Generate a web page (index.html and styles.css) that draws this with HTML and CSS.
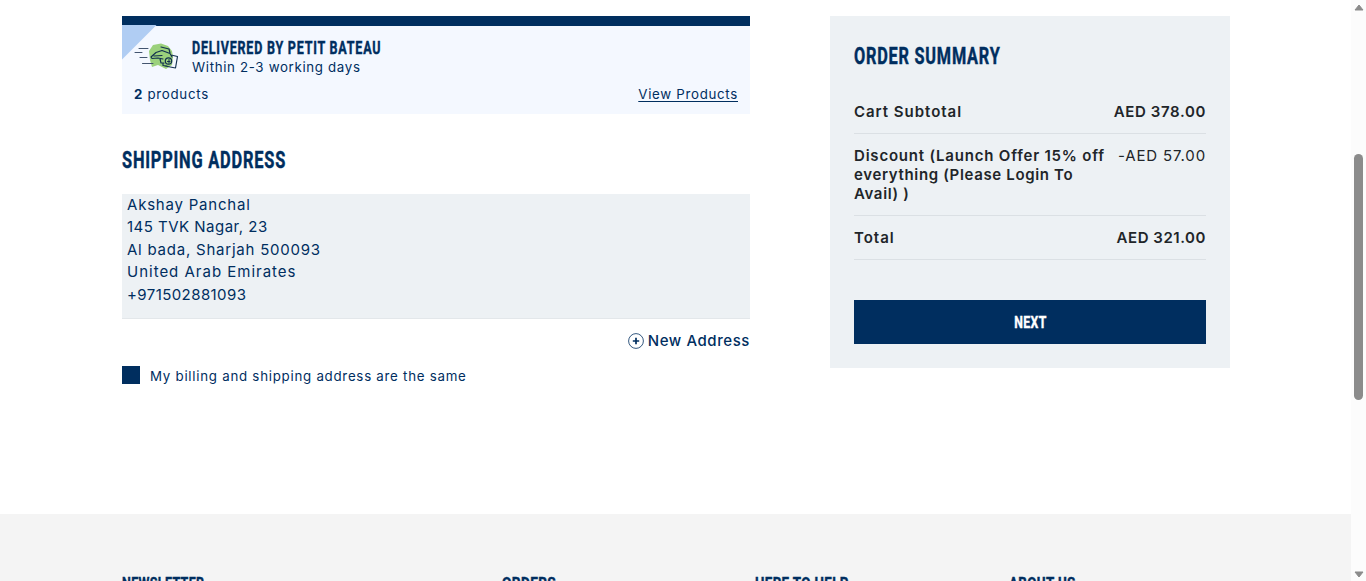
FILE: index.html
```html
<!DOCTYPE html>
<html lang="en">
<head>
<meta charset="utf-8">
<title>Checkout</title>
<link rel="stylesheet" href="styles.css">
</head>
<body>
<div class="window">
  <div class="page">
    <main class="checkout">
      <section class="details">
        <article class="delivery">
          <svg class="corner" viewBox="0 0 35 35"><path d="M0 0H34.500L0 34.500Z" fill="#b0cdf3"/></svg>
          <div class="delivery-head">
            <svg class="express" viewBox="0 0 46 28" fill="none" stroke-linecap="round" stroke-linejoin="round">
              <path d="M19 2 27 .5 34 3 38 8 39 14 38 22 32 26 24 22 18 24 16 17 15 8Z" fill="#9bd17c"/>
              <path d="M5 5.500H14M1 9.500H8M6 14.500H13M8.500 20.500H19" stroke="#43556f"/>
              <path d="M27 4 35 6 36 10M37 12 43.500 13.500 41.500 25 31 23M17 14 22 9.500 28 7.500 36 10.500 38 14M17 14 18 15.500 24 15 29 16M20 13 28 12.500M26 16 27 20 30 20M29 20 29 22.500 33 23" stroke="#12304f" stroke-width="1.150"/>
              <circle cx="34.500" cy="18" r="3.200" stroke="#12304f" stroke-width="1.200"/>
              <path d="M33.500 18.500H36M35 16.500V20" stroke="#12304f"/>
            </svg>
            <div>
              <h3 class="delivery-title"><span>DELIVERED BY PETIT BATEAU</span></h3>
              <p class="delivery-time">Within 2-3 working days</p>
            </div>
          </div>
          <div class="delivery-foot">
            <span class="count"><b>2</b> products</span>
            <a class="view" href="#">View Products</a>
          </div>
        </article>
        <h2 class="heading shipping"><span>SHIPPING ADDRESS</span></h2>
        <address class="address">
          <div><span class="a1">Akshay Panchal</span></div>
          <div><span class="a2">145 TVK Nagar, 23</span></div>
          <div><span class="a3">Al bada, Sharjah 500093</span></div>
          <div><span class="a4">United Arab Emirates</span></div>
          <div><span class="a5">+971502881093</span></div>
        </address>
        <a class="new-address" href="#">
          <svg viewBox="0 0 16 16" fill="none" stroke="#002e5f"><circle cx="8" cy="8" r="7.400" stroke-width=".8"/><path d="M8 4.800V11.200M4.800 8H11.200" stroke-width="1.700"/></svg>
          <span>New Address</span>
        </a>
        <label class="same"><i class="box"></i><span>My billing and shipping address are the same</span></label>
      </section>
      <aside class="summary">
        <h2 class="heading order"><span>ORDER SUMMARY</span></h2>
        <div class="row"><span class="s1">Cart Subtotal</span><span class="v1">AED 378.00</span></div>
        <div class="row"><span class="s2"><span class="l1">Discount (Launch Offer 15% off</span><br><span class="l2">everything (Please Login To</span><br><span class="l3">Avail) )</span></span><span class="minus">-AED 57.00</span></div>
        <div class="row"><span class="s3">Total</span><span class="v3">AED 321.00</span></div>
        <button class="next"><span>NEXT</span></button>
      </aside>
    </main>
    <footer class="footer">
      <h4 class="f1"><span>NEWSLETTER</span></h4>
      <h4 class="f2"><span>ORDERS</span></h4>
      <h4 class="f3"><span>HERE TO HELP</span></h4>
      <h4 class="f4"><span>ABOUT US</span></h4>
    </footer>
  </div>
  <div class="scrollbar">
    <svg viewBox="0 0 10 7"><path d="M5 1 9 6H1Z" fill="#8b8b8b" stroke="#8b8b8b" stroke-linejoin="round"/></svg>
    <div class="thumb"></div>
    <svg viewBox="0 0 10 7"><path d="M5 6 9 1H1Z" fill="#8b8b8b" stroke="#8b8b8b" stroke-linejoin="round"/></svg>
  </div>
</div>
</body>
</html>
```
FILE: styles.css
```css
* { box-sizing: border-box; }
html, body { height: 100%; overflow: hidden; }
body { margin: 0; background: #fff; color: #002e5f; font: 15px/22.4px Inter, sans-serif; letter-spacing: .5px; }
h2, h3, h4, p { margin: 0; }
a { color: inherit; text-decoration: none; }

.window { display: flex; height: 581px; }
.page { width: 1351px; height: 581px; overflow: hidden; }
.checkout { display: grid; grid-template-columns: 628px 400px; column-gap: 80px; align-items: start; height: 514px; padding: 16px 0 0 122px; }

.heading span, .delivery-title span, .next span, .footer span { display: inline-block; transform-origin: 0 50%; white-space: nowrap; font-family: Roboto, sans-serif; font-weight: 700; -webkit-text-stroke: .45px currentColor; }
.heading span, .delivery-title span { letter-spacing: 1.1px; }
.next span, .footer span { letter-spacing: .5px; }
.heading { font-size: 23px; line-height: 30px; }
.shipping span { transform: scaleX(.713); }
.order span { transform: scaleX(.708); }

.delivery { position: relative; height: 98px; border-top: 10px solid #002e5f; background: #f4f8ff; padding: 11px 12px 0; }
.corner { position: absolute; left: 0; top: -1px; width: 35px; height: 35px; }
.delivery-head { position: relative; display: flex; height: 47px; }
.express { width: 46px; height: 28px; margin: 6px 12px 0 0; flex: none; }
.delivery-title { height: 21px; font-size: 17.5px; line-height: 21px; }
.delivery-title span { transform: scaleX(.715); }
.delivery-time { font-size: 13.3px; line-height: 19px; letter-spacing: .66px; }
.delivery-foot { display: flex; justify-content: space-between; font-size: 13.3px; line-height: 20px; letter-spacing: .7px; }
.view { text-decoration: underline; text-underline-offset: 2px; }

.shipping { margin-top: 31px; }
.address { margin-top: 18px; height: 125px; padding: 0 5px; background: #edf1f4; border-bottom: 1px solid #e3e7ea; font-style: normal; }
.a1 { letter-spacing: .79px; }
.a2 { letter-spacing: .48px; }
.a3 { letter-spacing: .77px; }
.a4 { letter-spacing: .99px; }
.a5 { letter-spacing: .42px; }
.new-address { display: flex; justify-content: flex-end; align-items: center; gap: 4px; height: 22px; margin-top: 11px; font-weight: 500; letter-spacing: .58px; }
.new-address svg { width: 16px; height: 16px; }
.same { display: flex; align-items: flex-start; gap: 10px; margin-top: 14px; font-size: 13.3px; line-height: 20px; letter-spacing: .74px; }
.box { width: 18px; height: 18px; background: #002e5f; }

.summary { height: 352px; padding: 25px 24px 0; background: #edf1f4; color: #212529; }
.order { color: #002e5f; margin-bottom: 18px; }
.row { display: flex; justify-content: space-between; padding: 12px 0; border-bottom: 1px solid #dbe0e4; font-weight: 600; line-height: 19px; white-space: nowrap; }
.s1, .s3 { letter-spacing: .97px; }
.l1 { letter-spacing: .8px; }
.l2, .l3 { letter-spacing: .65px; }
.v1 { letter-spacing: .62px; }
.v3 { letter-spacing: .54px; }
.minus { font-weight: 400; letter-spacing: .86px; }
.next { display: block; width: 352px; height: 44px; margin-top: 40px; padding: 0; border: 0; background: #002e5f; color: #fff; font-size: 17px; text-align: center; }
.next span { transform: scaleX(.72); transform-origin: 50% 50%; }

.footer { display: grid; grid-template-columns: 380px 253px 253.500px 220px; height: 67px; padding: 59px 0 0 122px; background: #f4f4f4; }
.footer h4 { font-size: 17px; line-height: 20px; }
.f1 span { transform: scaleX(.732); }
.f2 span { transform: scaleX(.8); }
.f3 span, .f4 span { transform: scaleX(.783); }

.scrollbar { display: flex; flex-direction: column; align-items: center; width: 15px; height: 581px; padding: 4px 0 3px; background: #fcfcfc; }
.scrollbar svg { width: 10px; height: 7px; flex: none; }
.thumb { width: 9px; height: 246px; margin: 143px 0 auto; border-radius: 5px; background: #8b8b8b; }
```
